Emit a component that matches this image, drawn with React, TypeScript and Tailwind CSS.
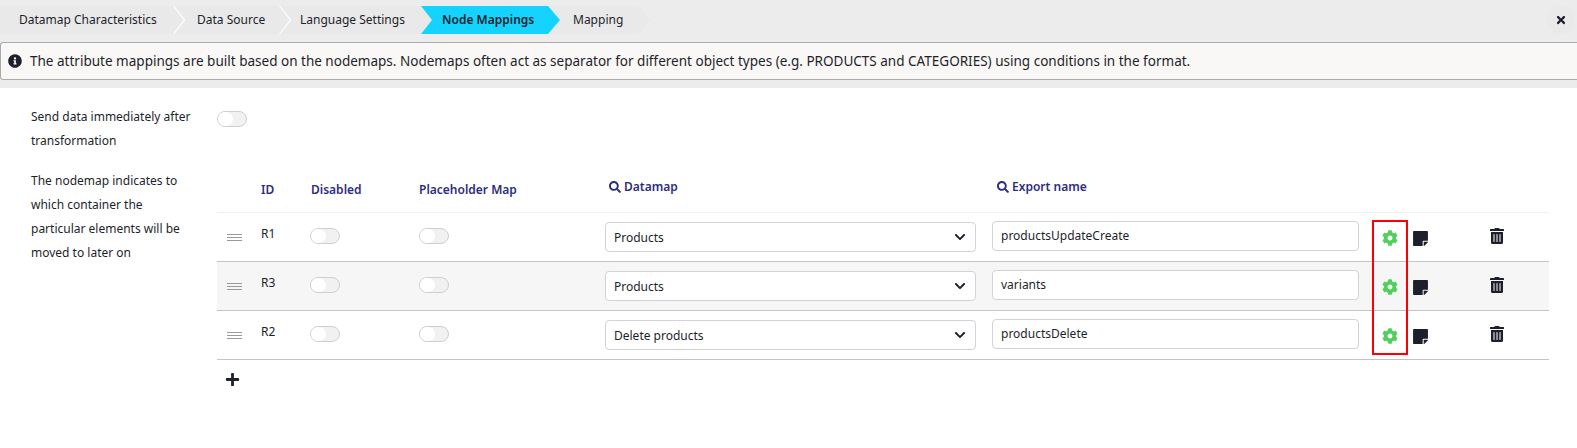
import React from 'react';
import { FaCog, FaChevronDown, FaInfoCircle, FaPlus, FaSearch, FaStickyNote, FaTimes, FaTrashAlt } from 'react-icons/fa';

const rows = [
  { id: 'R1', datamap: 'Products', name: 'productsUpdateCreate', bg: 'bg-white' },
  { id: 'R3', datamap: 'Products', name: 'variants', bg: 'bg-[#f6f6f6]' },
  { id: 'R2', datamap: 'Delete products', name: 'productsDelete', bg: 'bg-white' },
];

const gridCols = 'grid grid-cols-[45px_49px_108px_186px_387px_390px_31px_77px_1fr]';

const Toggle = () => (
  <div className="flex h-4 w-[30px] items-center rounded-full border border-[#cfcfcf] bg-[#f1f1f1]">
    <div className="h-[14px] w-[15px] rounded-full bg-white" />
  </div>
);

const Chevron = () => (
  <svg className="absolute left-full top-0 z-10" width="13" height="28" viewBox="0 0 13 28" fill="none">
    <path d="M0.5 0L11.5 14L0.5 28" stroke="#ffffff" strokeWidth="1.2" />
  </svg>
);

const App = () => {
  return (
    <div className="h-[448px] w-[1577px] overflow-hidden bg-white font-['Noto_Sans',sans-serif] text-[#1d1f2b]">
      {/* Steps */}
      <div className="flex h-[42px] items-start justify-between bg-[#ececec] pt-1.5 pr-[2px]">
        <div className="flex h-7 w-[650px] items-center bg-[#e9e9e9] text-[12px] [clip-path:polygon(0_0,calc(100%-11px)_0,100%_50%,calc(100%-11px)_100%,0_100%)]">
          <div className="relative flex h-7 w-[173px] items-center pl-[19px]">
            Datamap Characteristics
            <Chevron />
          </div>
          <div className="relative flex h-7 w-[106px] items-center pl-[24px]">
            Data Source
            <Chevron />
          </div>
          <div className="flex h-7 w-[142px] items-center pl-[21px]">Language Settings</div>
          <div className="flex h-7 w-[139px] items-center bg-[#14d4ff] pl-[21px] font-semibold [clip-path:polygon(0_0,calc(100%-12px)_0,100%_50%,calc(100%-12px)_100%,0_100%,11px_50%)]">
            Node Mappings
          </div>
          <div className="pl-[13px]">Mapping</div>
        </div>
        <div className="flex h-7 w-7 items-center justify-center rounded-full bg-[#eaeaea]">
          <FaTimes size={12} className="text-[#1d1f2b]" />
        </div>
      </div>

      {/* Info */}
      <div className="flex h-[38px] items-center gap-2 rounded-l-[3px] border border-r-0 border-[#aaaaaa] bg-[#f9f8f6] pl-[7px] text-[13.52px]">
        <FaInfoCircle size={14} />
        <span>
          The attribute mappings are built based on the nodemaps. Nodemaps often act as separator for different object types (e.g. PRODUCTS and CATEGORIES) using conditions in the format.
        </span>
      </div>
      <div className="h-2 bg-[#ececec]" />

      <div className="relative">
        <div className="flex h-[64px] text-[12px] leading-6">
          <div className="w-[217px] pl-[31px] pr-6 pt-[17px]">Send data immediately after transformation</div>
          <div className="pt-[23px]">
            <Toggle />
          </div>
        </div>

        <div className="flex">
          <div className="w-[217px] pl-[31px] pr-6 pt-[17px] text-[12px] leading-6">
            The nodemap indicates to which container the particular elements will be moved to later on
          </div>
          <div className="w-[1332px]">
            <div className={`${gridCols} h-[61px] items-center border-b border-[#f0f0f0] pt-[15px] text-[12px] font-semibold text-[#2d2d7f]`}>
              <div />
              <div className="-ml-px">ID</div>
              <div>Disabled</div>
              <div>Placeholder Map</div>
              <div className="-mt-1.5 flex items-center gap-[3px] pl-1">
                <FaSearch size={12} />
                Datamap
              </div>
              <div className="-mt-1.5 flex items-center gap-[3px] pl-[5px]">
                <FaSearch size={12} />
                Export name
              </div>
            </div>

            {rows.map((row) => (
              <div key={row.id} className={`${gridCols} h-[49px] items-center border-b border-[#c4c4c4] text-[12px] ${row.bg}`}>
                <div className="pl-[10px]">
                  <div className="flex w-[15px] flex-col gap-[2px]">
                    <div className="h-px bg-[#9a9a9a]" />
                    <div className="h-px bg-[#9a9a9a]" />
                    <div className="h-px bg-[#9a9a9a]" />
                  </div>
                </div>
                <div className="-ml-px -translate-y-[3px]">{row.id}</div>
                <div className="-ml-px -translate-y-px"><Toggle /></div>
                <div className="-translate-y-px"><Toggle /></div>
                <div>
                  <div className="flex h-[30px] w-[371px] items-center justify-between rounded-[4px] border border-[#d2d2d8] bg-white pl-2 pr-[9px]">
                    <span className="translate-y-px">{row.datamap}</span>
                    <FaChevronDown size={12} />
                  </div>
                </div>
                <div>
                  <div className="flex h-[30px] w-[367px] -translate-y-px items-center rounded-[4px] border border-[#d2d2d8] bg-white pl-2">
                    {row.name}
                  </div>
                </div>
                <div className="translate-y-px text-[#4fd05a]">
                  <FaCog size={16} />
                </div>
                <div className="-ml-px translate-y-px">
                  <FaStickyNote size={17} />
                </div>
                <div className="-ml-px -translate-y-px">
                  <FaTrashAlt size={16} />
                </div>
              </div>
            ))}

            <div className="pt-3 pl-[8px]">
              <FaPlus size={15} />
            </div>
          </div>
        </div>

        {/* Highlight around the gears */}
        <div className="absolute left-[1372px] top-[132px] h-[135px] w-[36px] border-2 border-[#ff0000]" />
      </div>
    </div>
  );
};

export default App;
